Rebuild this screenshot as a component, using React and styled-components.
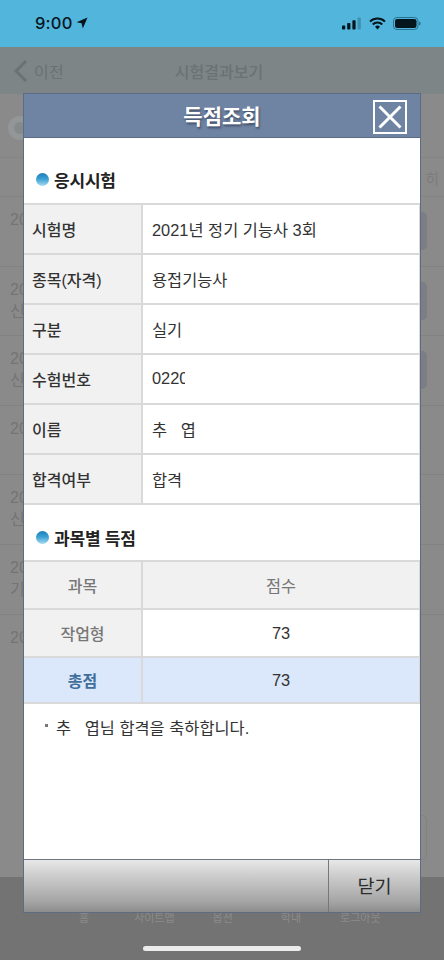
import React from "react";
import styled, { createGlobalStyle } from "styled-components";

const Global = createGlobalStyle`
  html, body { margin: 0; padding: 0; background: #8a8a8a; }
  * { box-sizing: border-box; }
  body { font-family: "Liberation Sans", "Noto Sans CJK KR", sans-serif; }
`;
const Screen = styled.div`
  position: relative; width: 444px; height: 960px; overflow: hidden;
  display: flex; flex-direction: column; background: #8a8a8a;
`;
const StatusBar = styled.div`
  height: 47px; flex: none; background: #52b5dc; display: flex; align-items: center;
  justify-content: space-between; padding: 2px 23px 3px 35px; color: #06141c;
`;
const Time = styled.div`
  display: flex; align-items: center; gap: 3px;
  font: 500 16.5px/1 Inter, sans-serif; letter-spacing: 0.2px;
`;
const StatusIcons = styled.div`display: flex; align-items: center; gap: 7px;`;
const Nav = styled.div`
  height: 47px; flex: none; background: #7d8586; display: flex; align-items: center;
  position: relative; padding-left: 13px; color: #6a7273; font-size: 16px;
`;
const Back = styled.div`display: flex; align-items: center; gap: 6px; font-size: 16px; letter-spacing: .3px;`;
const NavTitle = styled.div`flex: 1; text-align: center; margin-left: -36px; padding-right: 34px; font-weight: 500;`;
const Content = styled.div`flex: 1; display: flex; flex-direction: column; min-height: 0; color: #747474;`;
const Summary = styled.div`height: 63px; flex: none; display: flex; align-items: center; padding: 4px 0 0 8px;`;
const Disc = styled.div`
  width: 24px; height: 24px; border-radius: 50%; background: #858a8b; border: 6px solid #929697;
`;
const ListHead = styled.div`
  height: 39px; flex: none; border-top: 1px solid #848484; display: flex; justify-content: flex-end;
  align-items: center; padding-right: 5px; font-size: 15px; color: #7c7c7c;
`;
const ListRow = styled.div`
  height: 69.6px; flex: none; border-top: 1px solid #828282; display: flex; justify-content: space-between;
  padding: 12px 17px 0 10px; font-size: 16px; line-height: 22px;
`;
const RowButton = styled.div`width: 100%; height: 38px; background: #7c7d85; border-radius: 5px;`;
const RowAction = styled.div`width: 60px; margin-top: 3px; flex: none; margin-left: auto; height: 38px;`;
const RowText = styled.div`white-space: pre-line;`;
const LowerButton = styled.div`
  margin: auto 17px 17px auto; width: 60px; height: 45px; border: 1px solid #828282; border-radius: 5px;
`;
const Footer = styled.div`
  height: 83px; flex: none; background: #737373; display: flex; align-items: flex-start;
  padding: 32px 0 0 0; color: #8b8b8b; font-size: 11px; position: relative;
`;
const FootItem = styled.div`
  margin-left: ${p => p.$gap}px; white-space: nowrap;
`;
const HomeBar = styled.div`
  position: absolute; left: 143px; top: 946px; width: 158px; height: 5px; border-radius: 3px; background: #ececec;
`;

const Modal = styled.div`
  position: absolute; left: 23px; top: 93px; width: 398px; height: 820px; background: #fff;
  border: 1px solid #5d6b85; border-top-width: 1.5px; display: flex; flex-direction: column;
`;
const ModalHead = styled.div`
  position: relative; height: 44px; flex: none; background: #6f83a3; border-bottom: 1px solid #5d6b85;
  display: flex; align-items: center; justify-content: center; padding-bottom: 2px;
  color: #fff; font-size: 21px; font-weight: 700; text-shadow: 1px 2px 2px rgba(40,50,70,.6);
`;
const CloseBox = styled.div`
  position: absolute; right: 13px; top: 6px; width: 34px; height: 34px; border: 2px solid #fff;
  display: flex; align-items: center; justify-content: center;
`;
const ModalBody = styled.div`flex: 1; display: flex; flex-direction: column; min-height: 0;`;
const SectionTitle = styled.div`
  height: ${p => p.$h}px; flex: none; display: flex; align-items: center; gap: 5px; padding: ${p => p.$pad};
  font-size: 17px; font-weight: 700; color: #222; letter-spacing: -0.2px;
`;
const Bullet = styled.span`
  width: 13px; height: 13px; border-radius: 50%; flex: none;
  background: linear-gradient(#1a7fb8 0%, #3a9fd2 45%, #a8dcf0 100%);
`;
const Table = styled.div`
  display: grid; grid-template-columns: 119px 1fr; border-top: 2px solid #d9d9d9;
  border-right: 1px solid #d9d9d9;
`;
const Label = styled.div`
  height: ${p => p.$h}px; background: ${p => p.$bg || "#f1f1f1"}; border-right: 2px solid #d9d9d9;
  border-bottom: 2px solid #d9d9d9; display: flex; align-items: center;
  padding: ${p => p.$center ? "0" : "0 0 1px 8px"}; justify-content: ${p => p.$center ? "center" : "flex-start"};
  font-size: 16px; font-weight: ${p => p.$bold ? 700 : 500};
  color: ${p => p.$color || "#333"};
`;
const Value = styled.div`
  height: ${p => p.$h}px; background: ${p => p.$bg || "#fff"}; border-bottom: 2px solid #d9d9d9;
  display: flex; align-items: center; padding: ${p => p.$center ? "0" : "0 0 1px 9px"};
  justify-content: ${p => p.$center ? "center" : "flex-start"};
  font-size: 16.4px; color: ${p => p.$color || "#333"}; white-space: pre;
`;
const Masked = styled.span`display: inline-block; width: 33px; overflow: hidden;`;
const Note = styled.div`
  display: flex; align-items: center; gap: 8px; padding: 0 0 2px 21px; font-size: 16.4px; color: #333;
  white-space: pre; height: 48px;
`;
const NoteDot = styled.span`width: 3px; height: 3px; background: #777; flex: none; margin-bottom: 3px;`;
const ModalFoot = styled.div`
  height: 53px; flex: none; display: flex; border-top: 1px solid #6c7482;
  background: linear-gradient(#e8e8e8 0%, #cdcdcd 30%, #a5a5a5 80%, #8c8c8c 100%);
`;
const FootFill = styled.div`flex: 1;`;
const CloseBtn = styled.div`
  width: 92px; flex: none; border-left: 1px solid #777; display: flex; align-items: center; justify-content: center;
  font-size: 18.5px; color: #2c2c2c; padding-bottom: 2px;
`;

const rows = [
  ["시험명", "2021년 정기 기능사 3회"],
  ["종목(자격)", "용접기능사"],
  ["구분", "실기"],
  ["수험번호", <Masked key="n">02200</Masked>],
  ["이름", "추   엽"],
  ["합격여부", "합격"],
];
const bg = [["20", "", true], ["20", "신", true], ["20", "신", true], ["20", "", false], ["20", "신", false], ["20", "기", false], ["20", "", false]];

export default function App() {
  return (
    <Screen>
      <Global />
      <StatusBar>
        <Time>
          9:00
          <svg width="12" height="12" viewBox="0 0 12 12"><path d="M11.5.5 .6 5.2l5 1.1 1.2 5.2z" fill="#06141c" /></svg>
        </Time>
        <StatusIcons>
          <svg width="20" height="13" viewBox="0 0 20 13">
            <rect x="0" y="8.5" width="3.2" height="4" rx=".8" fill="#06141c" />
            <rect x="5.2" y="6" width="3.2" height="6.5" rx=".8" fill="#06141c" />
            <rect x="10.4" y="3.2" width="3.2" height="9.3" rx=".8" fill="#06141c" />
            <rect x="15.6" y=".5" width="3.2" height="12" rx=".8" fill="#3f8fb0" />
          </svg>
          <svg width="17" height="13" viewBox="0 0 17 13" fill="none" stroke="#06141c" strokeWidth="2">
            <path d="M1 4.6a10.8 10.8 0 0 1 15 0" />
            <path d="M3.7 7.4a7 7 0 0 1 9.6 0" />
            <path d="M8.5 12.4 6 9.8a3.5 3.5 0 0 1 5 0z" fill="#06141c" stroke="none" />
          </svg>
          <svg width="28" height="13" viewBox="0 0 28 13">
            <rect x=".5" y=".5" width="24.5" height="12" rx="3.5" fill="none" stroke="#27718f" />
            <rect x="2" y="2" width="21.5" height="9" rx="2.2" fill="#06141c" />
            <path d="M26 4.5c1 .3 1.6 1 1.6 2s-.6 1.7-1.6 2z" fill="#27718f" />
          </svg>
        </StatusIcons>
      </StatusBar>
      <Nav>
        <Back>
          <svg width="15" height="24" viewBox="0 0 15 24" fill="none" stroke="#6a7273" strokeWidth="3"><path d="M13 2 3 12l10 10" /></svg>
          이전
        </Back>
        <NavTitle>시험결과보기</NavTitle>
      </Nav>
      <Content>
        <Summary><Disc /></Summary>
        <ListHead>히</ListHead>
        {bg.map(([a, b, btn], i) => (
          <ListRow key={i}>
            <RowText>{a + "\n" + b}</RowText>
            {btn && <RowAction><RowButton /></RowAction>}
          </ListRow>
        ))}
        <LowerButton />
      </Content>
      <Footer>
        <FootItem $gap={79}>홈</FootItem>
        <FootItem $gap={45}>사이트맵</FootItem>
        <FootItem $gap={38}>옵션</FootItem>
        <FootItem $gap={48}>학내</FootItem>
        <FootItem $gap={39}>로그아웃</FootItem>
      </Footer>
      <HomeBar />
      <Modal>
        <ModalHead>
          득점조회
          <CloseBox>
            <svg width="24" height="24" viewBox="0 0 24 24" stroke="#fff" strokeWidth="3"><path d="M1.5 1.5l21 21M22.5 1.5l-21 21" /></svg>
          </CloseBox>
        </ModalHead>
        <ModalBody>
          <SectionTitle $h={65} $pad="18px 0 0 12px"><Bullet />응시시험</SectionTitle>
          <Table>
            {rows.map(([k, v]) => (
              <React.Fragment key={k}>
                <Label $h={50}>{k}</Label>
                <Value $h={50}>{v}</Value>
              </React.Fragment>
            ))}
          </Table>
          <SectionTitle $h={55} $pad="10px 0 0 12px"><Bullet />과목별 득점</SectionTitle>
          <Table>
            <Label $h={48} $center $color="#777">과목</Label>
            <Value $h={48} $center $bg="#f1f1f1" $color="#777">점수</Value>
            <Label $h={48} $center $color="#777">작업형</Label>
            <Value $h={48} $center>73</Value>
            <Label $h={46} $center $bold $bg="#dbe7fa" $color="#3f6f9a">총점</Label>
            <Value $h={46} $center $bg="#dbe7fa">73</Value>
          </Table>
          <Note><NoteDot />추   엽님 합격을 축하합니다.</Note>
        </ModalBody>
        <ModalFoot>
          <FootFill />
          <CloseBtn>닫기</CloseBtn>
        </ModalFoot>
      </Modal>
    </Screen>
  );
}
